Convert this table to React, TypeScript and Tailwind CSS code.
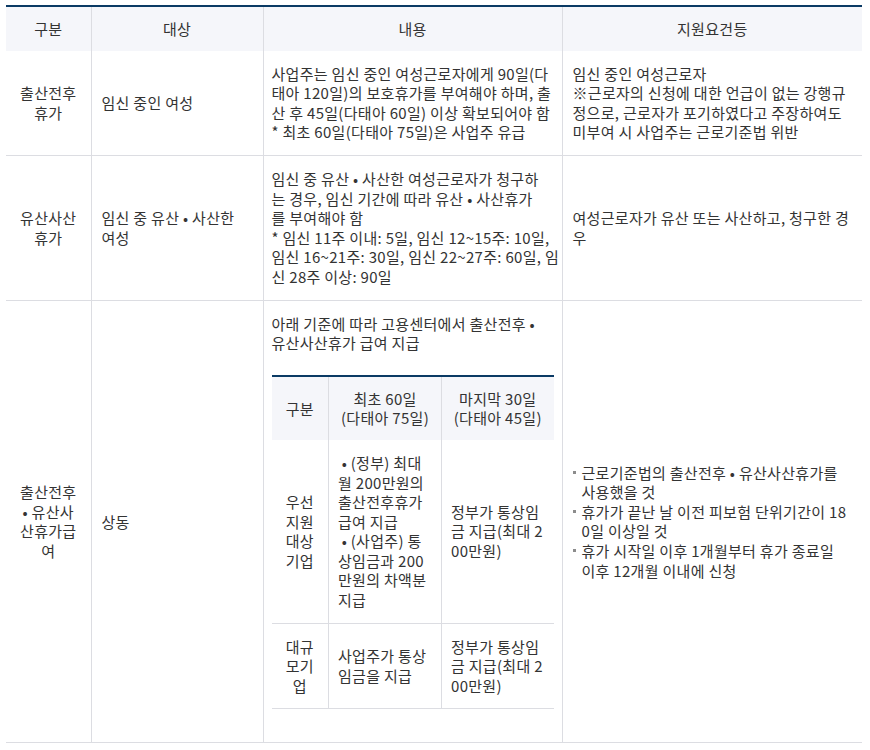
import React from "react";

const line = "border-[#dcdde2]";
const th =
  "bg-[#f5f6fa] py-[12px] px-[10px] text-center font-normal align-middle border-l border-[#dcdde2] first:border-l-0";
const td = `py-[13px] border-b border-l ${line} first:border-l-0`;

const Lines = ({ rows }: { rows: string[] }) => (
  <>
    {rows.map((r, i) => (
      <React.Fragment key={i}>
        {r}
        {i < rows.length - 1 && <br />}
      </React.Fragment>
    ))}
  </>
);

const requirements = [
  ["근로기준법의 출산전후 • 유산사산휴가를", "사용했을 것"],
  ["휴가가 끝난 날 이전 피보험 단위기간이 18", "0일 이상일 것"],
  ["휴가 시작일 이후 1개월부터 휴가 종료일", "이후 12개월 이내에 신청"],
];

const PayTable = () => (
  <table className="w-full table-fixed border-collapse border-t-2 border-[#0a3a64] mt-[22px] mb-[20px]">
    <colgroup>
      <col className="w-[57px]" />
      <col className="w-[113px]" />
      <col />
    </colgroup>
    <thead>
      <tr>
        <th className="bg-[#f5f6fa] py-[12px] font-normal text-center">구분</th>
        <th className={`bg-[#f5f6fa] py-[12px] font-normal text-center border-l ${line}`}>
          <Lines rows={["최초 60일", "(다태아 75일)"]} />
        </th>
        <th className={`bg-[#f5f6fa] py-[12px] font-normal text-center border-l ${line}`}>
          <Lines rows={["마지막 30일", "(다태아 45일)"]} />
        </th>
      </tr>
    </thead>
    <tbody>
      <tr>
        <td className={`py-[13px] text-center align-middle border-b ${line}`}>
          <Lines rows={["우선", "지원", "대상", "기업"]} />
        </td>
        <td className={`py-[13px] px-[9px] align-middle border-b border-l ${line}`}>
          <Lines
            rows={[
              "\u00a0• (정부) 최대",
              "월 200만원의",
              "출산전후휴가",
              "급여 지급",
              "\u00a0• (사업주) 통",
              "상임금과 200",
              "만원의 차액분",
              "지급",
            ]}
          />
        </td>
        <td className={`py-[13px] px-[9px] align-middle border-b border-l ${line}`}>
          <Lines rows={["정부가 통상임", "금 지급(최대 2", "00만원)"]} />
        </td>
      </tr>
      <tr>
        <td className={`py-[13px] text-center align-middle border-b ${line}`}>
          <Lines rows={["대규", "모기", "업"]} />
        </td>
        <td className={`py-[13px] px-[9px] align-middle border-b border-l ${line}`}>
          <Lines rows={["사업주가 통상", "임금을 지급"]} />
        </td>
        <td className={`py-[13px] px-[9px] align-middle border-b border-l ${line}`}>
          <Lines rows={["정부가 통상임", "금 지급(최대 2", "00만원)"]} />
        </td>
      </tr>
    </tbody>
  </table>
);

export default function App() {
  return (
    <div className="bg-white min-h-[750px] pt-[5px] pl-[6px] font-['Noto_Sans_CJK_KR','Noto_Sans',sans-serif] text-[15px] tracking-[0.3px] leading-[19.6px] text-[#333] whitespace-nowrap">
      <table className="w-[856px] table-fixed border-collapse border-t-2 border-[#0a3a64]">
        <colgroup>
          <col className="w-[85px]" />
          <col className="w-[172px]" />
          <col className="w-[299px]" />
          <col className="w-[300px]" />
        </colgroup>
        <thead>
          <tr>
            <th className={th}>구분</th>
            <th className={th}>대상</th>
            <th className={th}>내용</th>
            <th className={th}>지원요건등</th>
          </tr>
        </thead>
        <tbody>
          <tr>
            <td className={`${td} px-[9px] text-center align-middle`}>
              <Lines rows={["출산전후", "휴가"]} />
            </td>
            <td className={`${td} px-[10px] align-middle`}>임신 중인 여성</td>
            <td className={`${td} px-[8px] align-top`}>
              <Lines
                rows={[
                  "사업주는 임신 중인 여성근로자에게 90일(다",
                  "태아 120일)의 보호휴가를 부여해야 하며, 출",
                  "산 후 45일(다태아 60일) 이상 확보되어야 함",
                  "* 최초 60일(다태아 75일)은 사업주 유급",
                ]}
              />
            </td>
            <td className={`${td} px-[10px] align-middle`}>
              <Lines
                rows={[
                  "임신 중인 여성근로자",
                  "※근로자의 신청에 대한 언급이 없는 강행규",
                  "정으로, 근로자가 포기하였다고 주장하여도",
                  "미부여 시 사업주는 근로기준법 위반",
                ]}
              />
            </td>
          </tr>
          <tr>
            <td className={`${td} px-[9px] text-center align-middle`}>
              <Lines rows={["유산사산", "휴가"]} />
            </td>
            <td className={`${td} px-[10px] align-middle`}>
              <Lines rows={["임신 중 유산 • 사산한", "여성"]} />
            </td>
            <td className={`${td} px-[8px] align-top`}>
              <Lines
                rows={[
                  "임신 중 유산 • 사산한 여성근로자가 청구하",
                  "는 경우, 임신 기간에 따라 유산 • 사산휴가",
                  "를 부여해야 함",
                  "* 임신 11주 이내: 5일, 임신 12~15주: 10일,",
                  "임신 16~21주: 30일, 임신 22~27주: 60일, 임",
                  "신 28주 이상: 90일",
                ]}
              />
            </td>
            <td className={`${td} px-[10px] align-middle`}>
              <Lines rows={["여성근로자가 유산 또는 사산하고, 청구한 경", "우"]} />
            </td>
          </tr>
          <tr>
            <td className={`${td} px-[9px] text-center align-middle`}>
              <Lines rows={["출산전후", "• 유산사", "산휴가급", "여"]} />
            </td>
            <td className={`${td} px-[10px] align-middle`}>상동</td>
            <td className={`${td} px-[8px] align-top`}>
              <Lines rows={["아래 기준에 따라 고용센터에서 출산전후 •", "유산사산휴가 급여 지급"]} />
              <PayTable />
            </td>
            <td className={`${td} px-[10px] align-middle`}>
              <ul className="flex flex-col">
                {requirements.map((item, i) => (
                  <li key={i} className="flex gap-[6px]">
                    <span className="mt-[8px] w-[3px] h-[3px] shrink-0 bg-[#8c8c8c]" />
                    <span>
                      <Lines rows={item} />
                    </span>
                  </li>
                ))}
              </ul>
            </td>
          </tr>
        </tbody>
      </table>
    </div>
  );
}
